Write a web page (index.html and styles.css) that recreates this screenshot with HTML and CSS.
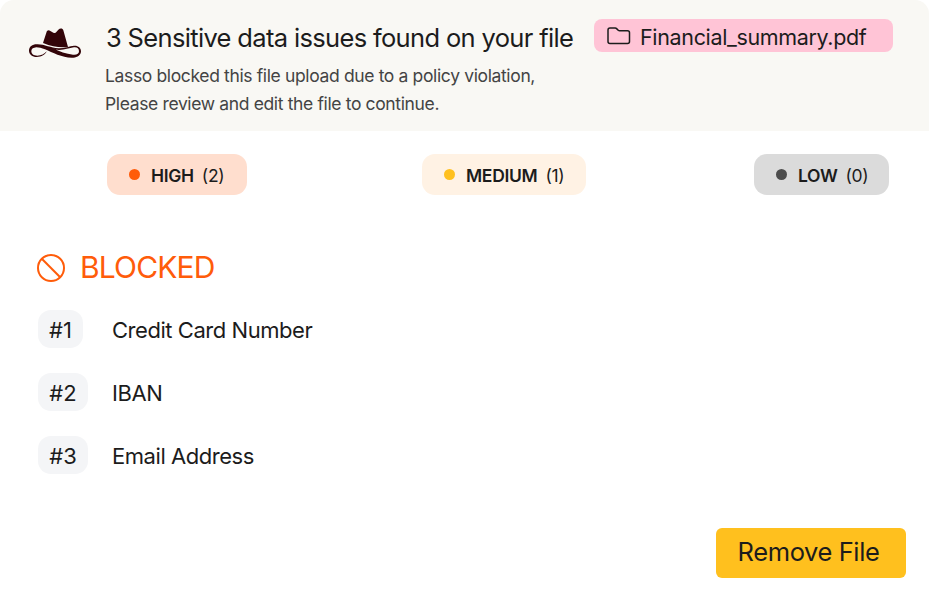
FILE: index.html
```html
<!DOCTYPE html>
<html lang="en">
  <head>
    <meta charset="UTF-8" />
    <meta name="viewport" content="width=device-width, initial-scale=1.0" />
    <title>Sensitive data issues</title>
    <link rel="stylesheet" href="styles.css">
  </head>
  <body>
    <div class="dialog">
      <!-- Header -->
      <header class="header">
        <svg class="logo" viewBox="0 0 156 90">
          <path fill="#330509" d="M42 45L52 14C54 7 59 5 64 9L73 14C77 16 80 15 82 12L88 5C93 0 101 0 103 7L117 57C93 60 70 56 42 45Z" />
          <path fill="#330509" fill-rule="evenodd" d="M53 70C49 80 38 87 23 87C10 87 0 79 0 68C0 56 10 49 23 49C45 48 65 60 88 61C106 62 121 54 135 53C147 52 156 59 156 70C156 81 146 89 133 89C102 91 72 74 48 64C38 60 30 58 22 58C13 59 7 62 7 69C7 78 14 83 25 83C37 83 46 78 53 70ZM72 61C91 70 112 79 132 80C143 81 150 78 150 70C150 61 144 57 135 58C120 60 108 66 90 66C83 66 78 64 72 61Z" />
        </svg>
        <div class="header-text">
          <h1 class="title">3 Sensitive data issues found on your file</h1>
          <p class="line-one">Lasso blocked this file upload due to a policy violation,</p>
          <p class="line-two">Please review and edit the file to continue.</p>
        </div>
        <div class="file">
          <svg class="folder" viewBox="0 0 24 18">
            <path d="M1 14.5V3Q1 1 3 1H8.2Q9 1 9.6 1.6L11.2 3.2Q11.8 3.8 12.6 3.8H20.5Q22.5 3.8 22.5 5.8V14.5Q22.5 16.5 20.5 16.5H3Q1 16.5 1 14.5Z" />
          </svg>
          <span>Financial_summary.pdf</span>
        </div>
      </header>

      <!-- Severity counts -->
      <div class="levels">
        <div class="level high"><i class="dot"></i><b>HIGH</b><span>(2)</span></div>
        <div class="level medium"><i class="dot"></i><b>MEDIUM</b><span>(1)</span></div>
        <div class="level low"><i class="dot"></i><b>LOW</b><span>(0)</span></div>
      </div>

      <!-- Blocked items -->
      <h2 class="blocked">
        <svg class="block-icon" viewBox="0 0 28 28">
          <circle cx="14" cy="14" r="13" />
          <path d="M4.8 4.8L23.2 23.2" />
        </svg>
        <span>BLOCKED</span>
      </h2>
      <ul class="issues">
        <li><span class="cell"><span class="number one">#1</span></span><span class="name">Credit Card Number</span></li>
        <li><span class="cell"><span class="number">#2</span></span><span class="name">IBAN</span></li>
        <li><span class="cell"><span class="number">#3</span></span><span class="name">Email Address</span></li>
      </ul>

      <button class="remove">Remove File</button>
    </div>
  </body>
</html>
```
FILE: styles.css
```css
* {
  box-sizing: border-box;
}

body {
  margin: 0;
  background: #fff;
  color: #1c1c1c;
  font-family: Inter, "Liberation Sans", sans-serif;
}

h1,
h2,
p,
ul {
  margin: 0;
  padding: 0;
  font-weight: 400;
  white-space: nowrap;
}

.dialog {
  display: flex;
  flex-direction: column;
  width: 929px;
  height: 601px;
}

/* Header */
.header {
  display: flex;
  align-items: flex-start;
  height: 131px;
  padding-left: 29px;
  background: #f9f8f4;
  border-radius: 14px 14px 0 0;
}

.logo {
  width: 52px;
  height: 30px;
  margin-top: 28px;
}

.header-text {
  width: 489px;
  margin: 20px 0 0 24px;
}

.title {
  padding-left: 1px;
  font-size: 25.5px;
  line-height: 36px;
  letter-spacing: -0.66px;
}

.line-one,
.line-two {
  color: #444;
  font-size: 17.5px;
  line-height: 28px;
  letter-spacing: -0.36px;
}

.line-one {
  margin-top: 6px;
}

.file {
  display: flex;
  align-items: center;
  gap: 9px;
  width: 299px;
  height: 33px;
  margin-top: 19px;
  padding: 2px 0 0 13px;
  background: #ffc4d6;
  border-radius: 8px;
  font-size: 21.5px;
  letter-spacing: -0.35px;
}

.folder {
  width: 24px;
  height: 18px;
  margin-top: -2px;
  fill: none;
  stroke: #1c1c1c;
  stroke-width: 1.5;
}

/* Severity counts */
.levels {
  display: flex;
  justify-content: space-between;
  margin: 23px 40px 0 107px;
}

.level {
  display: flex;
  align-items: center;
  height: 41px;
  padding-left: 22px;
  border-radius: 13px;
  font-size: 17.5px;
  letter-spacing: -0.3px;
}

.level b {
  margin: 1px 8px 0 11px;
  font-weight: 600;
}

.level span {
  margin-top: 1px;
}

.dot {
  width: 11px;
  height: 11px;
  border-radius: 50%;
}

.high {
  width: 140px;
  background: #ffdece;
}

.high .dot {
  background: #ff5c0a;
}

.medium {
  width: 164px;
  margin-left: 7px;
  background: #fff2e4;
}

.medium .dot {
  background: #ffc01e;
}

.low {
  width: 135px;
  background: #dbdbdb;
}

.low .dot {
  background: #4d4d4d;
}

/* Blocked items */
.blocked {
  display: flex;
  align-items: center;
  gap: 15px;
  height: 36px;
  margin: 55px 0 0 37px;
  color: #ff5c0a;
  font-size: 30px;
  line-height: 34px;
  letter-spacing: -0.85px;
}

.blocked span {
  padding-bottom: 2px;
}

.block-icon {
  width: 28px;
  height: 28px;
  fill: none;
  stroke: #ff5c0a;
  stroke-width: 2;
}

.issues {
  display: flex;
  flex-direction: column;
  gap: 25px;
  margin: 24px 0 0 38px;
  list-style: none;
  font-size: 22px;
}

.issues li {
  display: flex;
  align-items: center;
}

.cell {
  width: 74px;
}

.name {
  padding-top: 2px;
  letter-spacing: -0.45px;
}

.number {
  display: flex;
  align-items: center;
  justify-content: center;
  width: 50px;
  height: 38px;
  padding-top: 1px;
  background: #f4f5f7;
  border-radius: 13px;
}

.one {
  width: 45px;
}

.remove {
  width: 190px;
  height: 50px;
  margin: 54px 0 0 716px;
  padding: 0 5px 4px 0;
  background: #ffc01e;
  border: 0;
  border-radius: 6px;
  color: #1c1c1c;
  font-family: inherit;
  font-size: 25.5px;
  letter-spacing: -0.4px;
}
```
